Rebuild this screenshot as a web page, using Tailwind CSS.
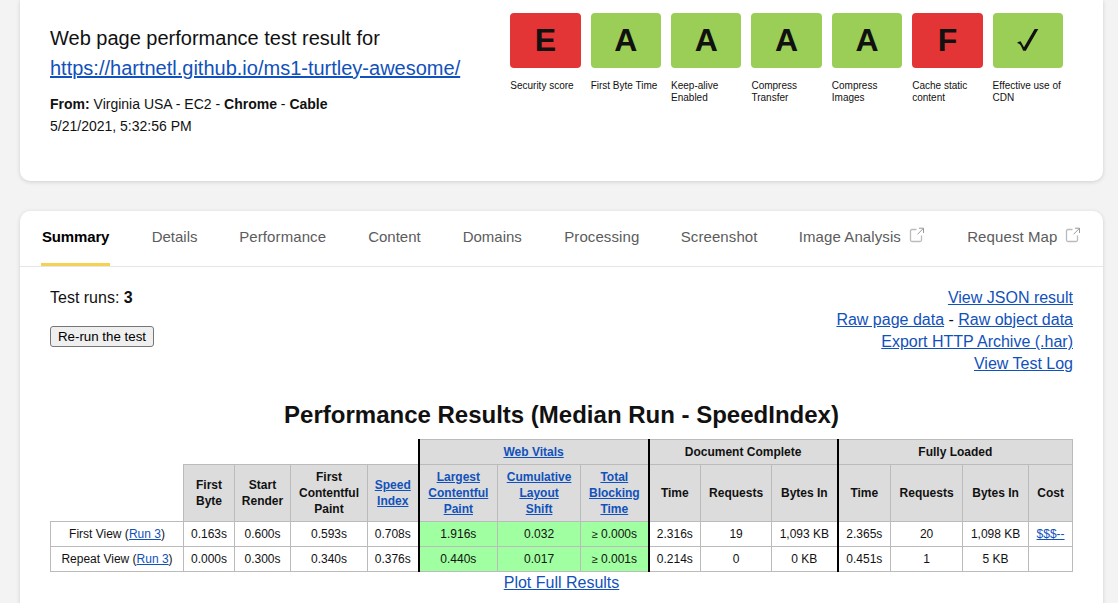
<!DOCTYPE html>
<html lang="en">
<head>
<meta charset="utf-8">
<title>WebPageTest - Performance Results</title>
<script src="https://cdn.jsdelivr.net/npm/@tailwindcss/browser@4"></script>
</head>
<body class="h-[603px] overflow-hidden bg-[#f3f3f3] font-['Liberation_Sans',Arial,sans-serif] text-[#111]">
<section class="ml-5 flex h-[181px] w-[1083px] justify-between rounded-b-[10px] bg-white pr-10 pl-[30px] shadow-[0_1px_4px_rgba(0,0,0,0.15)]">
  <header class="pt-[23px]">
    <h1 class="text-[20px] leading-[30px]">Web page performance test result for<br><a class="text-[#1151bb] underline">https://hartnetl.github.io/ms1-turtley-awesome/</a></h1>
    <p class="mt-[10px] text-[14px] leading-[22px]"><b>From:</b> Virginia USA - EC2 - <b>Chrome</b> - <b>Cable</b><br>5/21/2021, 5:32:56 PM</p>
  </header>
  <ul class="flex gap-[10px] pt-[13px] text-[10px] leading-[12px] [&>li]:w-[70.4px] [&>li>div]:mb-3 [&>li>div]:flex [&>li>div]:h-[55px] [&>li>div]:items-center [&>li>div]:justify-center [&>li>div]:rounded-[4px] [&>li>div]:pb-0.5 [&>li>div]:text-[32px] [&>li>div]:font-bold [&>li>p]:whitespace-nowrap">
    <li><div class="bg-[#e33535]">E</div><p>Security score</p></li>
    <li><div class="bg-[#9bce56]">A</div><p>First Byte Time</p></li>
    <li><div class="bg-[#9bce56]">A</div><p>Keep-alive<br>Enabled</p></li>
    <li><div class="bg-[#9bce56]">A</div><p>Compress<br>Transfer</p></li>
    <li><div class="bg-[#9bce56]">A</div><p>Compress<br>Images</p></li>
    <li><div class="bg-[#e33535]">F</div><p>Cache static<br>content</p></li>
    <li><div class="bg-[#9bce56]"><svg class="h-6 w-[22px]" viewBox="0 0 22 24" fill="#111"><path d="M.5 14.200 3.600 13.200 7 19.200 17.600.900H21.300L8.800 22.800H6.200C4.800 19.200 3.400 15.400.5 15.200Z"/></svg></div><p>Effective use of<br>CDN</p></li>
  </ul>
</section>

<main class="mt-[30px] ml-5 h-[420px] w-[1083px] rounded-t-[10px] bg-white shadow-[0_1px_4px_rgba(0,0,0,0.15)]">
  <nav class="flex h-14 border-b border-[#e6e6e6] pl-[21px] text-[15px] leading-[52px] whitespace-nowrap text-[#5c5c5c]">
    <a class="mr-[41.700px] h-[55px] w-[69px] border-b-[3px] border-[#f5d251] px-px font-bold tracking-[-0.15px] text-black">Summary</a>
    <a class="w-[87.500px]">Details</a>
    <a class="w-[129px] tracking-[0.1px]">Performance</a>
    <a class="w-[94.500px]">Content</a>
    <a class="w-[101.500px]">Domains</a>
    <a class="w-[116.500px] tracking-[0.1px]">Processing</a>
    <a class="w-[118px] tracking-[0.1px]">Screenshot</a>
    <a class="flex w-[168.500px] gap-2 tracking-[0.1px]">Image Analysis <svg class="mt-4 h-4 w-4" viewBox="0 0 16 16" fill="none" stroke="#bbb" stroke-width="1.3"><path d="M7.500 2.500H3Q1.500 2.500 1.500 4V13Q1.500 14.500 3 14.500H11Q12.500 14.500 12.500 13V8.500"/><path d="M10 1.200H14.500V6M14.300 1.500 8.500 7.300" stroke="#999" stroke-width="1"/></svg></a>
    <a class="flex gap-[7px] tracking-[0.1px]">Request Map <svg class="mt-4 h-4 w-4" viewBox="0 0 16 16" fill="none" stroke="#bbb" stroke-width="1.3"><path d="M7.500 2.500H3Q1.500 2.500 1.500 4V13Q1.500 14.500 3 14.500H11Q12.500 14.500 12.500 13V8.500"/><path d="M10 1.200H14.500V6M14.300 1.500 8.500 7.300" stroke="#999" stroke-width="1"/></svg></a>
  </nav>
  <div class="px-[30px] pt-5">
    <div class="flex justify-between text-[16px] leading-[22px]">
      <div>
        <p>Test runs: <b>3</b></p>
        <button class="mt-[17px] block h-[21px] w-[104px] rounded-[3px] border border-[#767676] bg-[#efefef] text-[13.333px] leading-[19px] whitespace-nowrap text-black">Re-run the test</button>
      </div>
      <div class="text-right [&_a]:text-[#1151bb] [&_a]:underline">
        <a>View JSON result</a><br><a>Raw page data</a> - <a>Raw object data</a><br><a>Export HTTP Archive (.har)</a><br><a>View Test Log</a>
      </div>
    </div>
    <h2 class="mt-[25px] text-center text-[24px] leading-[30px] font-bold">Performance Results (Median Run - SpeedIndex)</h2>
    <table class="mt-[9px] w-[1023px] table-fixed border-collapse text-center text-[12px] leading-[16px] [&_a]:text-[#1151bb] [&_a]:underline [&_td]:border [&_td]:border-[#bbb] [&_td]:p-0 [&_th]:border [&_th]:border-[#bbb] [&_th]:bg-[#dcdcdc] [&_th]:p-0">
      <colgroup><col class="w-[133px]"><col class="w-[51px]"><col class="w-[56px]"><col class="w-[77px]"><col class="w-[51px]"><col class="w-[79px]"><col class="w-[83px]"><col class="w-[68px]"><col class="w-[52px]"><col class="w-[71px]"><col class="w-[66px]"><col class="w-[53px]"><col class="w-[72px]"><col class="w-[66px]"><col class="w-[44px]"></colgroup>
      <tbody>
        <tr class="h-[25px]"><td colspan="5" class="border-t-0! border-l-0! border-b-0!"></td><th colspan="3" class="border-l-2! border-l-black!"><a>Web Vitals</a></th><th colspan="3" class="border-l-2! border-l-black!">Document Complete</th><th colspan="4" class="border-l-2! border-l-black!">Fully Loaded</th></tr>
        <tr class="h-[57px]"><td class="border-t-0! border-l-0!"></td><th>First<br>Byte</th><th>Start<br>Render</th><th>First<br>Contentful<br>Paint</th><th><a>Speed<br>Index</a></th><th class="border-l-2! border-l-black!"><a>Largest<br>Contentful<br>Paint</a></th><th><a>Cumulative<br>Layout<br>Shift</a></th><th><a>Total<br>Blocking<br>Time</a></th><th class="border-l-2! border-l-black!">Time</th><th>Requests</th><th>Bytes In</th><th class="border-l-2! border-l-black!">Time</th><th>Requests</th><th>Bytes In</th><th>Cost</th></tr>
        <tr class="h-[25px]"><td>First View (<a>Run 3</a>)</td><td>0.163s</td><td>0.600s</td><td>0.593s</td><td>0.708s</td><td class="border-l-2! border-l-black! bg-[#a0ffa0]">1.916s</td><td class="bg-[#a0ffa0]">0.032</td><td class="bg-[#a0ffa0]"><span class="text-[11px]">≥</span> 0.000s</td><td class="border-l-2! border-l-black!">2.316s</td><td>19</td><td>1,093 KB</td><td class="border-l-2! border-l-black!">2.365s</td><td>20</td><td>1,098 KB</td><td><a>$$$--</a></td></tr>
        <tr class="h-[25px]"><td>Repeat View (<a>Run 3</a>)</td><td>0.000s</td><td>0.300s</td><td>0.340s</td><td>0.376s</td><td class="border-l-2! border-l-black! bg-[#a0ffa0]">0.440s</td><td class="bg-[#a0ffa0]">0.017</td><td class="bg-[#a0ffa0]"><span class="text-[11px]">≥</span> 0.001s</td><td class="border-l-2! border-l-black!">0.214s</td><td>0</td><td>0 KB</td><td class="border-l-2! border-l-black!">0.451s</td><td>1</td><td>5 KB</td><td></td></tr>
      </tbody>
    </table>
    <p class="text-center text-[16px] leading-[22px]"><a class="text-[#1151bb] underline">Plot Full Results</a></p>
  </div>
</main>
</body>
</html>
